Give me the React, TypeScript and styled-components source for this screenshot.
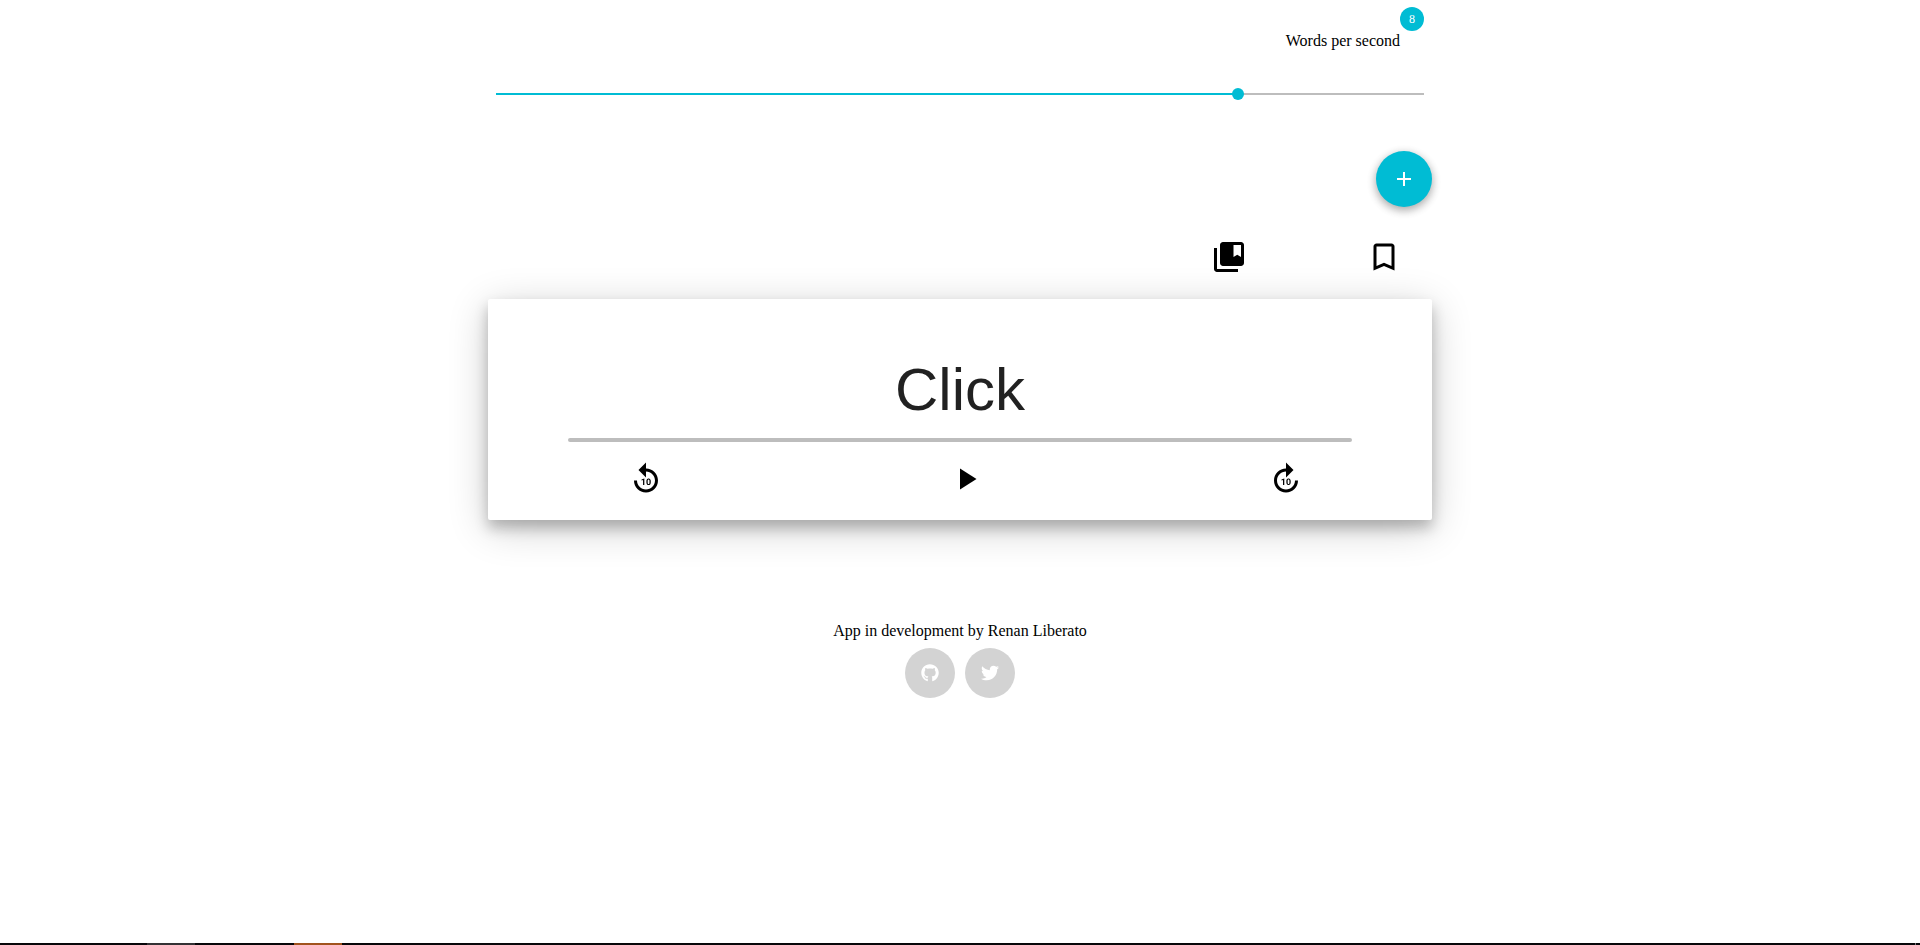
import React, { useState } from "react";
import styled, { createGlobalStyle } from "styled-components";
import {
  MdAdd,
  MdBookmarkBorder,
  MdCollectionsBookmark,
  MdForward10,
  MdPlayArrow,
  MdReplay10,
} from "react-icons/md";
import { FaGithub, FaTwitter } from "react-icons/fa";

const cyan = "#00bcd4";
const grey = "#bdbdbd";

const GlobalStyle = createGlobalStyle`
  body {
    margin: 0;
    background: #fff;
    color: #000;
    font: 16px/18px "Liberation Serif", "Times New Roman", serif;
  }
`;

const Page = styled.div`
  min-height: 100vh;
  display: flex;
  flex-direction: column;
  align-items: center;
`;

const Column = styled.main`
  width: calc(50% - 16px);
  display: flex;
  flex-direction: column;
`;

const Speed = styled.section`
  padding: 7px 8px 0;
  display: flex;
  flex-direction: column;
`;

const SpeedLabel = styled.div`
  position: relative;
  align-self: flex-end;
  padding: 25px 24px 0 12px;
`;

const Badge = styled.output`
  position: absolute;
  top: 0;
  right: 0;
  width: 24px;
  height: 24px;
  border-radius: 50%;
  background: ${cyan};
  color: #fff;
  font-size: 12px;
  line-height: 24px;
  text-align: center;
`;

const Slider = styled.input<{ $percent: number }>`
  appearance: none;
  height: 18px;
  margin: 35px -6px 0;
  cursor: pointer;
  background: linear-gradient(
      to right,
      ${cyan} ${(p) => p.$percent}%,
      ${grey} ${(p) => p.$percent}%
    )
    center / calc(100% - 12px) 2px no-repeat;

  &::-webkit-slider-thumb {
    appearance: none;
    width: 12px;
    height: 12px;
    border-radius: 50%;
    background: ${cyan};
  }
`;

const AddButton = styled.button`
  align-self: flex-end;
  width: 56px;
  height: 56px;
  margin-top: 48px;
  padding: 0;
  border: 0;
  border-radius: 50%;
  display: flex;
  align-items: center;
  justify-content: center;
  background: ${cyan};
  color: #fff;
  font-size: 24px;
  cursor: pointer;
  box-shadow: 0 3px 10px rgba(0, 0, 0, 0.16), 0 3px 10px rgba(0, 0, 0, 0.23);
`;

const Bookmarks = styled.nav`
  display: flex;
  justify-content: flex-end;
  gap: 119px;
  margin-top: 32px;
  padding-right: 30px;
`;

const IconButton = styled.button`
  display: flex;
  padding: 0;
  border: 0;
  background: none;
  color: #000;
  font-size: 36px;
  cursor: pointer;
`;

const Reader = styled.section`
  margin-top: 24px;
  padding: 55px 80px 23px;
  border-radius: 2px;
  background: #fff;
  box-shadow: 0 8px 40px rgba(0, 0, 0, 0.2), 0 8px 14px rgba(0, 0, 0, 0.23);
`;

const Word = styled.p`
  margin: 0;
  color: rgba(0, 0, 0, 0.87);
  font: 60px/72px "Liberation Sans", Arial, sans-serif;
  text-align: center;
`;

const Progress = styled.progress`
  appearance: none;
  display: block;
  width: 100%;
  height: 4px;
  margin-top: 12px;
  border: 0;
  border-radius: 2px;
  overflow: hidden;

  &::-webkit-progress-bar {
    background: ${grey};
  }
  &::-webkit-progress-value {
    background: ${cyan};
  }
`;

const Controls = styled.div`
  display: flex;
  justify-content: space-between;
  margin-top: 19px;
  padding: 0 48px 0 60px;
`;

const Credits = styled.footer`
  margin-top: 102px;
  display: flex;
  flex-direction: column;
  align-items: center;
  gap: 8px;
`;

const SocialLinks = styled.div`
  display: flex;
  gap: 10px;
`;

const SocialLink = styled.a`
  width: 50px;
  height: 50px;
  border-radius: 50%;
  display: flex;
  align-items: center;
  justify-content: center;
  background: #d3d3d3;
  color: #fff;
  font-size: 18px;
`;

const EdgeBar = styled.div`
  align-self: stretch;
  height: 2px;
  margin-top: auto;
  display: flex;
  gap: 99px;
  padding: 0 4px 0 147px;
  background: #08070a;
`;

const EdgeMark = styled.span<{ $color: string; $width: number; $last?: boolean }>`
  width: ${(p) => p.$width}px;
  margin-left: ${(p) => (p.$last ? "auto" : "0")};
  background: ${(p) => p.$color};
`;

export default function App() {
  const [speed, setSpeed] = useState(8);

  return (
    <Page>
      <GlobalStyle />
      <Column>
        <Speed>
          <SpeedLabel>
            <label htmlFor="speed">Words per second</label>
            <Badge htmlFor="speed">{speed}</Badge>
          </SpeedLabel>
          <Slider
            id="speed"
            type="range"
            min={0}
            max={10}
            value={speed}
            $percent={speed * 10}
            onChange={(e) => setSpeed(Number(e.target.value))}
          />
        </Speed>
        <AddButton aria-label="Add text">
          <MdAdd />
        </AddButton>
        <Bookmarks>
          <IconButton aria-label="Saved bookmarks">
            <MdCollectionsBookmark />
          </IconButton>
          <IconButton aria-label="Bookmark">
            <MdBookmarkBorder />
          </IconButton>
        </Bookmarks>
        <Reader>
          <Word>Click</Word>
          <Progress value={0} max={100} aria-label="Reading progress" />
          <Controls>
            <IconButton aria-label="Back 10">
              <MdReplay10 />
            </IconButton>
            <IconButton aria-label="Play">
              <MdPlayArrow />
            </IconButton>
            <IconButton aria-label="Forward 10">
              <MdForward10 />
            </IconButton>
          </Controls>
        </Reader>
      </Column>
      <Credits>
        <span>App in development by Renan Liberato</span>
        <SocialLinks>
          <SocialLink href="#github" aria-label="GitHub">
            <FaGithub />
          </SocialLink>
          <SocialLink href="#twitter" aria-label="Twitter">
            <FaTwitter />
          </SocialLink>
        </SocialLinks>
      </Credits>
      <EdgeBar>
        <EdgeMark $color="#343235" $width={48} />
        <EdgeMark $color="#a1531d" $width={48} />
        <EdgeMark $color="#77757a" $width={1} $last />
      </EdgeBar>
    </Page>
  );
}
